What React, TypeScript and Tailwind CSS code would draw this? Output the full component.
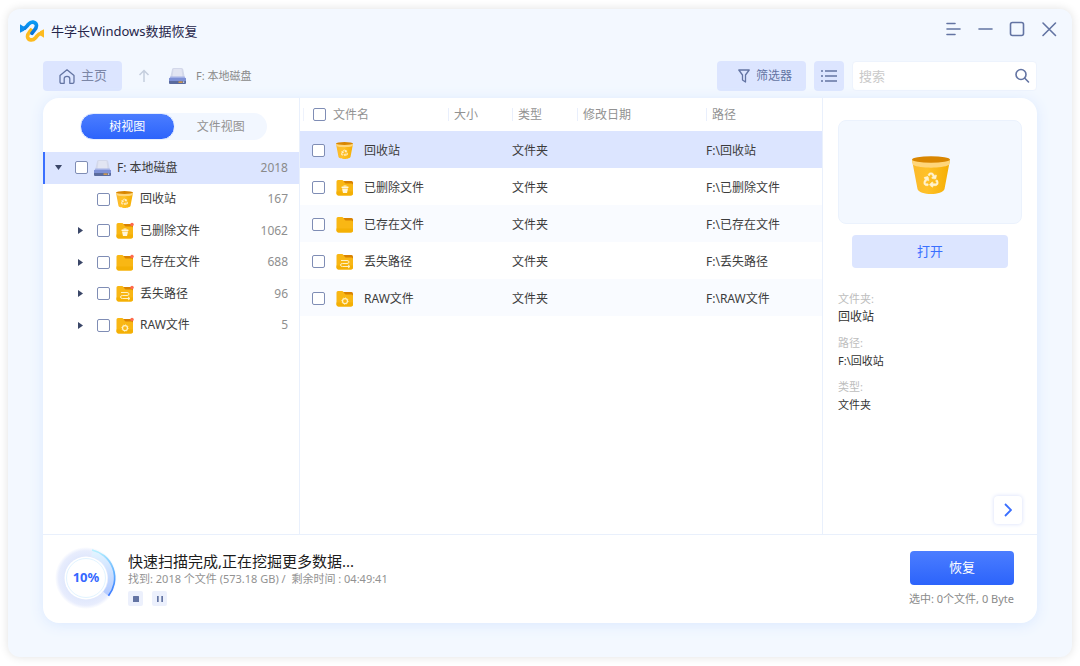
import React from "react";
import { FaRecycle } from "react-icons/fa";

type Kind = "bin" | "deleted" | "existing" | "lost" | "raw";

const FILES: { name: string; kind: Kind; count: number }[] = [
  { name: "回收站", kind: "bin", count: 167 },
  { name: "已删除文件", kind: "deleted", count: 1062 },
  { name: "已存在文件", kind: "existing", count: 688 },
  { name: "丢失路径", kind: "lost", count: 96 },
  { name: "RAW文件", kind: "raw", count: 5 },
];

const SELECTED: Kind = "bin";

const COLUMNS = ["大小", "类型", "修改日期", "路径"];

const DETAILS = [
  { label: "文件夹:", value: "回收站" },
  { label: "路径:", value: "F:\\回收站" },
  { label: "类型:", value: "文件夹" },
];

function Logo() {
  const band = "M8 26 C17 27 20 18 26 12 C34 3 46 5 49 14 C52 24 44 28 36 40";
  const tip = "M0 13 L13 21 L12 32 L0 38 Z";
  return (
    <svg className="h-[22px] w-6 shrink-0" viewBox="0 0 72 66" fill="none" aria-hidden="true">
      <defs>
        <linearGradient id="logo-blue" x1="0" y1="0" x2="0" y2="1">
          <stop offset="0" stopColor="#0a9bf5" />
          <stop offset="1" stopColor="#0872d8" />
        </linearGradient>
      </defs>
      <g transform="rotate(180 36 33)">
        <path d={band} stroke="#fdbb1f" strokeWidth="11" />
        <path d={tip} fill="#fdbb1f" />
      </g>
      <path d={band} stroke="url(#logo-blue)" strokeWidth="11" strokeLinecap="round" />
      <path d={tip} fill="#0b8ff0" />
    </svg>
  );
}

function DriveIcon() {
  return (
    <svg className="h-4 w-[17px] shrink-0" viewBox="0 0 34 32" aria-hidden="true">
      <path d="M6 3 Q6 0 9 0 H25 Q28 0 28.500 3 L32 21 H2 Z" fill="#d3d8ea" />
      <path d="M9 2 H25 L27 18 H7 Z" fill="#e2e5f2" />
      <path d="M3 17 H31 L34 22 H0 Z" fill="#a3b1e6" />
      <rect x="0" y="21" width="34" height="11" rx="2" fill="#5a6b9e" />
      <rect x="0" y="20" width="34" height="6" rx="1" fill="#7e91d6" />
      <rect x="19" y="27" width="8" height="2.500" fill="#f4a73a" />
      <rect x="28" y="27" width="2.500" height="2.500" fill="#dce4ff" />
    </svg>
  );
}

function BinIcon({ className }: { className: string }) {
  return (
    <svg className={className} viewBox="0 0 38 38" aria-hidden="true">
      <defs>
        <linearGradient id="bin-body" x1="0" x2="1">
          <stop offset="0" stopColor="#fbb92c" />
          <stop offset="0.4" stopColor="#ffc128" />
          <stop offset="1" stopColor="#f5ae03" />
        </linearGradient>
      </defs>
      <path d="M0 4 L5.500 33 C6 36 13 38 19 38 S32 36 32.500 33 L38 4 Z" fill="url(#bin-body)" />
      <path d="M0 4 L1 9 C8 12.500 30 12.500 37 9 L38 4 Z" fill="#ffd67a" />
      <ellipse cx="19" cy="3.500" rx="19" ry="3.300" fill="#d98600" />
      <FaRecycle x={11.5} y={16.5} size={15} color="#fff3cf" stroke="#fff3cf" strokeWidth={20} />
    </svg>
  );
}

function FileIcon({ kind, flagged = false }: { kind: Kind; flagged?: boolean }) {
  if (kind === "bin") return <BinIcon className="h-[17px] w-[17px] shrink-0" />;
  return (
    <svg className="h-[17px] w-[18px] shrink-0" viewBox="0 0 36 34" fill="none" aria-hidden="true">
      <path d="M12 4 H31 Q34 4 34 7 V14 H12 Z" fill="#d98200" />
      <path d="M1 5 Q1 2 4 2 H12 Q14 2 15 4 L17 7 Q18 9 20 9 H31 Q34 9 34 12 V29 Q34 33 30 33 H5 Q1 33 1 29 Z" fill="#f9b714" />
      <path d="M1 25 H34 V29 Q34 33 30 33 H5 Q1 33 1 29 Z" fill="#f4b005" />
      {kind === "deleted" && (
        <g fill="#fff6dc">
          <rect x="11" y="15" width="14" height="3" rx="1" />
          <rect x="15" y="13" width="6" height="2" />
          <path d="M12 19 H24 L22 28 H14 Z" />
        </g>
      )}
      {kind === "lost" && (
        <path
          d="M10 15 H22 Q26 15 26 18 Q26 21 22 21 H13 Q9 21 9 24 Q9 27 13 27 H27 M24 24 L28 27 L24 30"
          stroke="#fff1c4"
          strokeWidth="2"
        />
      )}
      {kind === "raw" && (
        <g stroke="#fff1c4">
          <circle cx="18" cy="22" r="5" strokeWidth="2.500" />
          <circle cx="18" cy="22" r="6.500" strokeWidth="1.500" strokeDasharray="2 3" />
        </g>
      )}
      {flagged && <circle cx="32" cy="5" r="3.500" fill="#ff6a4d" />}
    </svg>
  );
}

function CheckBox({ label }: { label: string }) {
  return (
    <input
      type="checkbox"
      aria-label={label}
      className="block size-[13px] shrink-0 appearance-none rounded-[2px] border border-[#7f8db5] bg-white checked:bg-[#3a6fff]"
    />
  );
}

function TitleBar() {
  const control = "flex size-4 items-center justify-center";
  return (
    <header className="flex h-11 items-center pr-[15px] pl-3">
      <Logo />
      <h1 className="ml-[7px] flex-1 text-[13px] leading-5 text-[#25254a]">牛学长Windows数据恢复</h1>
      <div className="mb-1 flex gap-4 text-[#6374a3]">
        <button className={control} aria-label="菜单">
          <svg className="size-4" viewBox="0 0 16 16" fill="none" stroke="currentColor" strokeWidth="1.600" strokeLinecap="round">
            <path d="M2 2.500H10M2 8H15M2 13.500H10" />
          </svg>
        </button>
        <button className={control} aria-label="最小化">
          <svg className="size-4" viewBox="0 0 16 16" stroke="currentColor" strokeWidth="1.600" strokeLinecap="round">
            <path d="M2 8H15" />
          </svg>
        </button>
        <button className={control} aria-label="最大化">
          <svg className="size-4" viewBox="0 0 16 16" fill="none" stroke="currentColor" strokeWidth="1.600">
            <rect x="1.500" y="1.500" width="13" height="13" rx="2" />
          </svg>
        </button>
        <button className={control} aria-label="关闭">
          <svg className="size-4" viewBox="0 0 16 16" stroke="currentColor" strokeWidth="1.600" strokeLinecap="round">
            <path d="M2 2L14.500 14.500M14.500 2L2 14.500" />
          </svg>
        </button>
      </div>
    </header>
  );
}

function Toolbar() {
  return (
    <nav className="mt-2 flex h-[30px] items-stretch">
      <button className="flex w-[79px] items-center justify-end gap-1.5 rounded bg-[#dce5ff] pr-[15px] text-[13px] text-[#7b86a6]">
        <svg className="h-[15px] w-4" viewBox="0 0 16 15" fill="none" stroke="#6374a3" strokeWidth="1.300" strokeLinejoin="round" aria-hidden="true">
          <path d="M1 6.500L8 0.800L15 6.500V13Q15 14.300 13.700 14.300H10.800V9.800Q10.800 7.300 8 7.300T5.200 9.800V14.300H2.300Q1 14.300 1 13Z" />
        </svg>
        主页
      </button>
      <button className="ml-4 flex items-center" aria-label="上一级">
        <svg className="h-3.5 w-3" viewBox="0 0 12 14" fill="none" stroke="#c5cede" strokeWidth="1.500" aria-hidden="true">
          <path d="M6 13V1.500M1.500 6L6 1.500L10.500 6" />
        </svg>
      </button>
      <div className="ml-[19px] flex flex-1 items-center gap-[10px] text-[11px] text-[#8a8a8a]">
        <DriveIcon />
        F: 本地磁盘
      </div>
      <button className="flex w-[89px] items-center justify-end gap-1.5 rounded bg-[#dce5ff] pr-3.5 text-xs text-[#6374a3]">
        <svg className="h-3.5 w-3" viewBox="0 0 12 14" fill="none" stroke="currentColor" strokeWidth="1.300" strokeLinejoin="round" aria-hidden="true">
          <path d="M0.800 1H11.200L7.500 6V13L4.500 11V6Z" />
        </svg>
        筛选器
      </button>
      <button className="ml-2 flex w-[30px] items-center justify-center rounded bg-[#dce5ff]" aria-label="列表视图">
        <svg className="h-3 w-4" viewBox="0 0 16 12" stroke="#6374a3" strokeWidth="1.300" aria-hidden="true">
          <path d="M0 1H2M4 1H16M0 6H2M4 6H16M0 11H2M4 11H16" />
        </svg>
      </button>
      <label className="ml-2 flex w-[185px] items-center rounded border border-[#edf3fd] bg-white pr-1.5 pl-1.5">
        <input
          type="text"
          aria-label="搜索"
          placeholder="搜索"
          className="w-full min-w-0 flex-1 text-[13px] leading-5 outline-none placeholder:text-[#c9c9c9]"
        />
        <svg className="size-4 shrink-0" viewBox="0 0 16 16" fill="none" stroke="#6374a3" strokeWidth="1.600" strokeLinecap="round" aria-hidden="true">
          <circle cx="7" cy="6.500" r="5" />
          <path d="M10.800 10.200L14.500 14" />
        </svg>
      </label>
    </nav>
  );
}

function Tree() {
  return (
    <aside className="flex w-[257px] shrink-0 flex-col border-r border-[#e9f0fc]">
      <div className="mt-[15px] mb-3 ml-[37px] flex w-[187px] rounded-full bg-[#f2f7ff]">
        <button className="h-[27px] flex-1 rounded-full border border-[#e6eeff] bg-linear-to-b from-[#4b7dff] to-[#2c63fb] text-xs text-white">
          树视图
        </button>
        <button className="h-[27px] flex-1 rounded-full text-xs text-[#929292]">文件视图</button>
      </div>
      <ul className="grid h-[189px] grid-rows-6 text-xs text-[#3c3c3c]">
        <li className="flex items-center border-l-2 border-[#3a6fff] bg-[#dce5ff] pr-[11px] pl-2.5">
          <button aria-label="折叠">
            <svg className="h-[5px] w-[7px]" viewBox="0 0 7 5" fill="#3b4768">
              <path d="M0 0H7L3.500 5Z" />
            </svg>
          </button>
          <label className="ml-[13px] flex flex-1 items-center">
            <CheckBox label="F: 本地磁盘" />
            <span className="mr-1.5 ml-1.5 flex">
              <DriveIcon />
            </span>
            F: 本地磁盘
          </label>
          <span className="text-[#8a8a8a]">2018</span>
        </li>
        {FILES.map((f) => (
          <li key={f.kind} className="flex items-center pr-[11px] pl-[35px]">
            <button aria-label={"展开 " + f.name} className={f.kind === "bin" ? "invisible" : ""}>
              <svg className="h-[7px] w-[5px]" viewBox="0 0 5 7" fill="#3b4768">
                <path d="M0 0V7L5 3.500Z" />
              </svg>
            </button>
            <label className="ml-3.5 flex flex-1 items-center">
              <CheckBox label={f.name} />
              <span className="mx-1.5 flex w-[18px]">
                <FileIcon kind={f.kind} flagged />
              </span>
              {f.name}
            </label>
            <span className="text-[#8f8f8f]">{f.count}</span>
          </li>
        ))}
      </ul>
    </aside>
  );
}

function FileTable() {
  return (
    <section className="min-w-0 flex-1">
      <table className="w-full table-fixed text-left text-xs text-[#3c3c3c]">
        <colgroup>
          <col className="w-[148px]" />
          <col className="w-16" />
          <col className="w-[65px]" />
          <col className="w-[129px]" />
          <col />
        </colgroup>
        <thead>
          <tr className="h-[33px] text-[#929292]">
            <th className="p-0 pl-[3px] font-normal">
              <label className="flex h-[13px] items-center gap-[7px] border-l border-[#eef2fc] pl-[9px]">
                <CheckBox label="全选" />
                文件名
              </label>
            </th>
            {COLUMNS.map((c) => (
              <th key={c} className="p-0 font-normal">
                <span className="flex h-[13px] items-center border-l border-[#e9effc] pl-[5px]">{c}</span>
              </th>
            ))}
          </tr>
        </thead>
        <tbody>
          {FILES.map((f) => (
            <tr key={f.kind} className={f.kind === SELECTED ? "h-[37px] bg-[#dce5ff]" : "h-[37px] odd:bg-[#f9fbff]"}>
              <td className="p-0 pt-0.5 pl-3">
                <label className="flex items-center">
                  <CheckBox label={f.name} />
                  <span className="mr-2.5 ml-[11px] flex w-[18px]">
                    <FileIcon kind={f.kind} />
                  </span>
                  {f.name}
                </label>
              </td>
              <td className="p-0" />
              <td className="p-0 pt-0.5">文件夹</td>
              <td className="p-0" />
              <td className="p-0 pt-0.5">{"F:\\" + f.name}</td>
            </tr>
          ))}
        </tbody>
      </table>
    </section>
  );
}

function DetailPanel() {
  return (
    <aside className="flex w-[215px] shrink-0 flex-col border-l border-[#e9f0fc] px-[15px] pt-[22px] pb-[10px]">
      <div className="flex h-[104px] items-center justify-center rounded-lg border border-[#ebf2fd] bg-[#f3f8ff] pt-1.5 pl-0.5">
        <BinIcon className="size-[38px]" />
      </div>
      <button className="mx-3.5 mt-[11px] h-[33px] rounded bg-[#dce5ff] text-[13px] text-[#3a6fff]">打开</button>
      <dl className="mt-[22px] flex flex-col gap-2 text-[11px] leading-[18px]">
        {DETAILS.map((d) => (
          <div key={d.label} className="group">
            <dt className="text-[#bdbdbd]">{d.label}</dt>
            <dd className="text-[#333] group-first:text-[12px]">{d.value}</dd>
          </div>
        ))}
      </dl>
      <button
        aria-label="收起详情"
        className="mt-auto flex size-7 items-center justify-center self-end rounded bg-white shadow-[0_0_4px_#d5ddfa]"
      >
        <svg className="h-3.5 w-2" viewBox="0 0 8 14" fill="none" stroke="#3a6fff" strokeWidth="1.800" aria-hidden="true">
          <path d="M1 1L7 7L1 13" />
        </svg>
      </button>
    </aside>
  );
}

function ProgressRing() {
  return (
    <div className="grid size-[62px] shrink-0 place-items-center">
      <svg className="col-start-1 row-start-1 size-[62px]" viewBox="0 0 62 62" fill="none" aria-hidden="true">
        <defs>
          <linearGradient id="arc" x1="0" y1="0" x2="0" y2="1">
            <stop offset="0" stopColor="#b8f2ff" />
            <stop offset="0.5" stopColor="#5fb0ff" />
            <stop offset="1" stopColor="#3a78ff" />
          </linearGradient>
          <linearGradient id="wedge" x1="0" y1="0" x2="0" y2="1">
            <stop offset="0" stopColor="#e2f3ff" />
            <stop offset="1" stopColor="#b5cbff" />
          </linearGradient>
          <radialGradient id="halo">
            <stop offset="0.65" stopColor="#dfe7fc" />
            <stop offset="0.88" stopColor="#e8edfd" />
            <stop offset="1" stopColor="#ffffff" />
          </radialGradient>
        </defs>
        <circle cx="31" cy="31" r="31" fill="url(#halo)" />
        <path d="M37 6 A25.700 25.700 0 0 1 51 47" stroke="url(#wedge)" strokeWidth="7" />
        <path d="M37 3 A28.600 28.600 0 0 1 53.500 48.700" stroke="url(#arc)" strokeWidth="1.700" />
        <circle cx="31" cy="31" r="21.500" fill="#ffffff" />
        <circle cx="31" cy="31" r="19.500" stroke="#e2f4ff" strokeWidth="1" />
      </svg>
      <span className="col-start-1 row-start-1 text-[13px] font-bold text-[#3568ff]">10%</span>
    </div>
  );
}

function Footer() {
  const mini = "flex size-[15px] items-center justify-center rounded-[2px] bg-[#ecf0fc]";
  return (
    <footer className="flex h-[89px] items-start border-t border-[#e9f0fc] pr-[23px] pl-3">
      <div className="pt-3">
        <ProgressRing />
      </div>
      <div className="ml-[11px] flex-1 pt-4">
        <p className="text-[15px] leading-5 text-[#1c1c1c]">快速扫描完成,正在挖掘更多数据...</p>
        <p className="text-[11px] leading-4 whitespace-pre text-[#929292]">{"找到: 2018 个文件 (573.18 GB) /  剩余时间 : 04:49:41"}</p>
        <div className="mt-1 flex gap-[9px]">
          <button className={mini} aria-label="停止">
            <svg className="size-1.5" viewBox="0 0 6 6" fill="#6374a3">
              <rect width="6" height="6" rx="0.500" />
            </svg>
          </button>
          <button className={mini} aria-label="暂停">
            <svg className="size-1.5" viewBox="0 0 6 6" fill="#6374a3">
              <path d="M0 0H1.700V6H0ZM4.300 0H6V6H4.300Z" />
            </svg>
          </button>
        </div>
      </div>
      <div className="flex flex-col items-end pt-4">
        <button className="h-[34px] w-[104px] rounded bg-linear-to-b from-[#4b7dff] to-[#2c63fb] text-[13px] text-white">恢复</button>
        <p className="mt-[5px] text-[11px] leading-[18px] text-[#8a8a8a]">选中: 0个文件, 0 Byte</p>
      </div>
    </footer>
  );
}

export default function App() {
  return (
    <div className="flex min-h-screen flex-col bg-white px-2 py-[9px] font-['Noto_Sans','Noto_Sans_CJK_SC',sans-serif]">
      <div className="flex flex-1 flex-col rounded-xl bg-[#f3f8ff] shadow-[0_0_10px_rgba(0,0,0,0.12)]">
        <TitleBar />
        <div className="flex flex-1 flex-col px-[35px] pb-[34px]">
          <Toolbar />
          <main className="mt-[7px] flex flex-1 flex-col overflow-hidden rounded-2xl bg-white shadow-[0_2px_14px_#dbe9ff]">
            <div className="flex flex-1">
              <Tree />
              <FileTable />
              <DetailPanel />
            </div>
            <Footer />
          </main>
        </div>
      </div>
    </div>
  );
}
